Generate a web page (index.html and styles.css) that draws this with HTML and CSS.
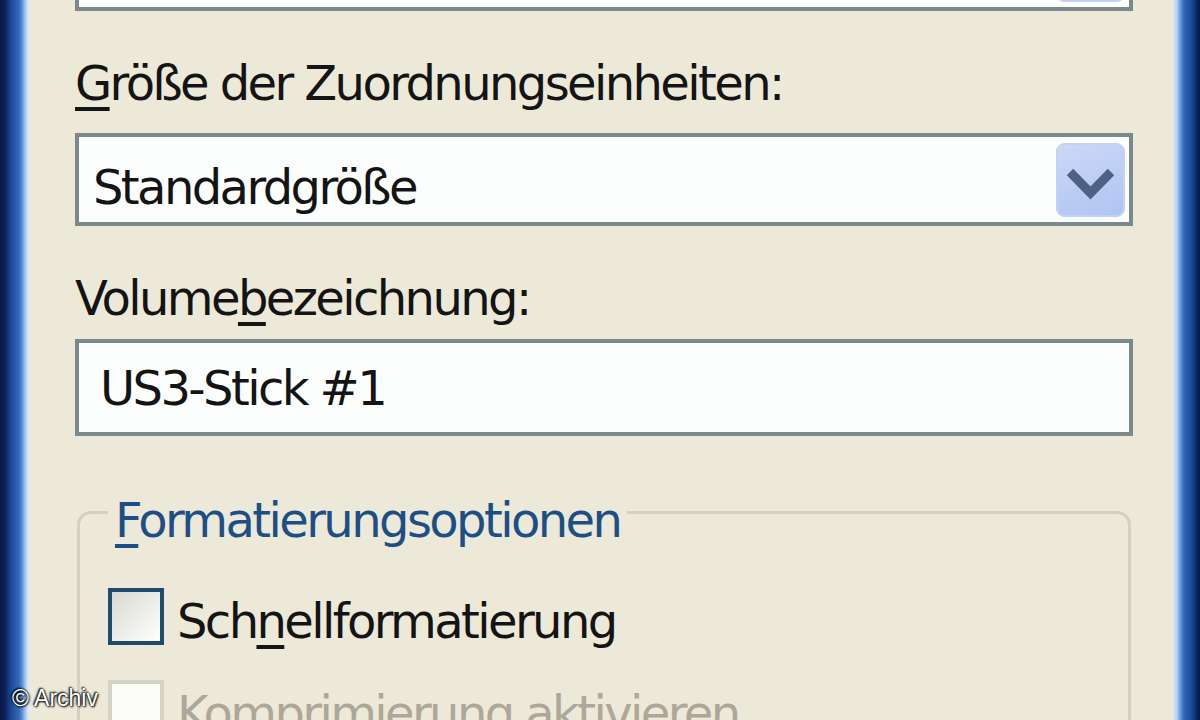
FILE: index.html
```html
<!DOCTYPE html>
<html lang="de">
<head>
<meta charset="utf-8">
<title>Formatieren</title>
<link rel="stylesheet" href="styles.css">
</head>
<body>
<div class="window">
  <div class="frame-left"></div>
  <div class="client">
    <div class="combo combo-top">
      <span class="combo-text"></span>
      <span class="drop-btn">
        <svg viewBox="0 0 69 74" width="69" height="74"><path d="M14 29 L34.5 50 L55 29" fill="none" stroke="#4d6185" stroke-width="9"/></svg>
      </span>
    </div>

    <div class="label label-first"><u>G</u>röße der Zuordnungseinheiten:</div>
    <div class="combo combo-size">
      <span class="combo-text">Standardgröße</span>
      <span class="drop-btn">
        <svg viewBox="0 0 69 74" width="69" height="74"><path d="M14 29 L34.5 50 L55 29" fill="none" stroke="#4d6185" stroke-width="9"/></svg>
      </span>
    </div>

    <div class="label label-second">Volume<u>b</u>ezeichnung:</div>
    <div class="textbox"><span class="textbox-text">US3-Stick #1</span></div>

    <fieldset class="group">
      <legend class="group-title"><u>F</u>ormatierungsoptionen</legend>
      <div class="check-row check-row-first">
        <span class="checkbox"></span>
        <span class="check-label">Sch<u>n</u>ellformatierung</span>
      </div>
      <div class="check-row check-row-disabled">
        <span class="checkbox checkbox-disabled"></span>
        <span class="check-label check-label-disabled">Komprimierung aktivieren</span>
      </div>
    </fieldset>
  </div>
  <div class="frame-right"></div>
  <div class="watermark">© Archiv</div>
</div>
</body>
</html>
```
FILE: styles.css
```css
* { box-sizing: border-box; }

html, body {
  margin: 0;
  padding: 0;
  width: 1200px;
  height: 720px;
  overflow: hidden;
  background: #ece9d8;
}

.window {
  position: relative;
  display: flex;
  width: 1200px;
  height: 720px;
  overflow: hidden;
  font-family: "DejaVu Sans", "Verdana", sans-serif;
  font-size: 48px;
  letter-spacing: -2.6px;
  color: #141414;
}

.frame-left {
  flex: 0 0 30px;
  background: linear-gradient(to right,
    #0a1846 0px, #0c2058 5px, #163d86 9px, #2657a6 14px,
    #3468b6 19px, #5890d2 22px, #9cc4ec 25px, #d6e8f6 28px, #e6ecec 30px);
}

.frame-right {
  flex: 0 0 27px;
  background: linear-gradient(to right,
    #dfe6ec 0px, #b4d0f0 4px, #6d9fe0 7px, #2f64b8 11px,
    #1f4f9f 17px, #143c84 21px, #0b2662 24px, #071a46 27px);
}

.client {
  flex: 1;
  display: flex;
  flex-direction: column;
  padding: 0 40px 0 45px;
  background: #ece9d8;
  min-width: 0;
}

/* Combobox */
.combo {
  display: flex;
  align-items: center;
  justify-content: space-between;
  height: 93px;
  border: 4px solid #7c898c;
  background: #fcfefe;
  padding: 0 4px 0 14px;
  flex: 0 0 auto;
}

.combo-top {
  margin-top: -82px;
}

.combo-size {
  margin-top: 22px;
}

.combo-text {
  line-height: 56px;
  margin-top: 14px;
  white-space: nowrap;
}

.drop-btn {
  display: block;
  width: 69px;
  height: 74px;
  border-radius: 9px;
  background: linear-gradient(160deg, #cdd8f8 0%, #bccdf4 55%, #aec4ef 100%);
  box-shadow: inset 0 0 0 2px #c3d2f3;
}

.drop-btn svg {
  display: block;
}

/* Labels */
.label {
  line-height: 56px;
  height: 56px;
  white-space: nowrap;
  flex: 0 0 auto;
}

.label-first {
  margin-top: 44px;
}

.label-second {
  margin-top: 44px;
}

u {
  text-decoration-thickness: 4px;
  text-underline-offset: 7px;
}

/* Text box */
.textbox {
  display: flex;
  align-items: center;
  margin-top: 13px;
  height: 97px;
  border: 4px solid #7c898c;
  background: #fcfefe;
  padding: 0 0 0 21px;
  flex: 0 0 auto;
}

.textbox-text {
  line-height: 56px;
  white-space: nowrap;
}

/* Group box */
.group {
  margin: 41px 2px 0 2px;
  padding: 0 0 0 28px;
  border: 3px solid #d3d0c0;
  border-radius: 14px;
  min-width: 0;
  flex: 1 0 auto;
}

.group-title {
  padding: 15px 7px 0 7px;
  line-height: 56px;
  color: #1d4f86;
  white-space: nowrap;
}

.check-row {
  display: flex;
  align-items: flex-start;
  gap: 13px;
}

.check-row-first {
  margin-top: 40px;
}

.check-row-disabled {
  margin-top: 31px;
}

.checkbox {
  flex: 0 0 56px;
  width: 56px;
  height: 57px;
  border: 4px solid #1f4a70;
  background: linear-gradient(135deg, #d8d8d0 0%, #eeeeea 55%, #ffffff 100%);
}

.checkbox-disabled {
  border-color: #d6d3c6;
  background: #fbfbf8;
}

.check-label {
  line-height: 56px;
  margin-top: 5px;
  white-space: nowrap;
}

.check-label-disabled {
  color: #aca899;
}

/* Watermark overlay */
.watermark {
  position: absolute;
  left: 12px;
  top: 684px;
  font-family: "Liberation Sans", Arial, sans-serif;
  font-size: 23px;
  letter-spacing: 0;
  line-height: 28px;
  color: #ffffff;
  text-shadow: 0 0 2px #000, 1px 1px 2px #000, -1px -1px 2px #000;
}
```
